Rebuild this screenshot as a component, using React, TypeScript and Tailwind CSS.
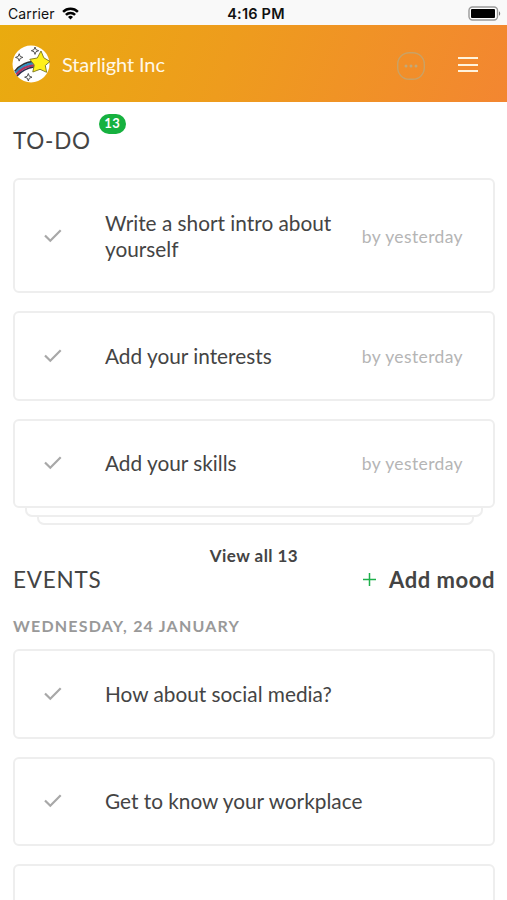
import React from 'react';

interface Task {
  id: string;
  title: string;
  due?: string;
}

const todos: Task[] = [
  { id: 'intro', title: 'Write a short intro about yourself', due: 'by yesterday' },
  { id: 'interests', title: 'Add your interests', due: 'by yesterday' },
  { id: 'skills', title: 'Add your skills', due: 'by yesterday' },
];

const events: Task[] = [
  { id: 'social', title: 'How about social media?' },
  { id: 'workplace', title: 'Get to know your workplace' },
  { id: 'next', title: '' },
];

const StatusBar: React.FC = () => (
  <div className="grid h-[25px] shrink-0 grid-cols-3 items-center bg-[#f9f9f9] pt-[3px] pr-[6px] pl-[8px] font-['Inter',sans-serif] text-[#111]">
    <div className="flex items-center gap-[7px]">
      <span className="text-[14px] leading-5 tracking-[0.1px]">Carrier</span>
      <svg className="mb-px" width="17" height="13" viewBox="0 0 17 13" fill="none" stroke="#000" strokeWidth="2.500">
        <path d="M1.100 4.900a10.500 10.500 0 0 1 14.800 0" />
        <path d="M3.900 7.900a6.500 6.500 0 0 1 9.200 0" />
        <path d="M8.500 12.500 6 10a3.500 3.500 0 0 1 5 0z" fill="#000" stroke="none" />
      </svg>
    </div>
    <span className="pl-[3px] text-center text-[14.5px] leading-5 font-semibold tracking-[0.2px]">4:16 PM</span>
    <svg className="mb-[2px] justify-self-end" width="33" height="15" viewBox="0 0 33 15">
      <rect x="1" y="1" width="28.500" height="13" rx="3.500" fill="#fff" stroke="#999" strokeWidth="1.400" />
      <rect x="3" y="3" width="24" height="9" rx="1" fill="#000" />
      <path d="M31 5.200c1.600.8 1.600 3.800 0 4.600z" fill="#777" />
    </svg>
  </div>
);

const Logo: React.FC = () => (
  <svg width="38" height="38" viewBox="0 0 38 38">
    <circle cx="19" cy="19" r="18.500" fill="#fff" />
    <path d="M2.800 26.500C7.500 20.500 13 17 22 16.500" fill="none" stroke="#333" strokeWidth="2" />
    <path d="M3.500 28C8.500 22 14 19 22 18.300" fill="none" stroke="#2f8fc0" strokeWidth="2.400" />
    <path d="M4.300 29.500C9 24 15 21 22 20.400" fill="none" stroke="#b5325f" strokeWidth="2.400" />
    <path d="M5 31C10 25.500 15.500 22.800 22 22" fill="none" stroke="#2c2c50" strokeWidth="1.600" />
    <path
      d="M29 6 31.800 12.800 38 16.500 33.300 20.500 34.600 27.300 28 24.300 20.800 27 22.300 20 17.800 14.300 25.300 13z"
      fill="#fff01a"
      stroke="#77751c"
      strokeWidth="0.900"
      strokeLinejoin="round"
    />
    <g fill="#fff" stroke="#444" strokeWidth="0.900">
      <path d="M23 2l1 2.700 2.700 1-2.700 1-1 2.700-1-2.700-2.700-1 2.700-1z" />
      <path d="M7.200 8.700l1 2.700 2.700 1-2.700 1-1 2.700-1-2.700-2.700-1 2.700-1z" />
      <path d="M16.300 28.500l1 2.700 2.700 1-2.700 1-1 2.700-1-2.700-2.700-1 2.700-1z" />
    </g>
  </svg>
);

const Header: React.FC = () => (
  <header className="flex h-[77px] shrink-0 items-center bg-[linear-gradient(110deg,#e9ab0f_0%,#ee9c1d_45%,#f38631_100%)] pr-[29px] pl-[12px]">
    <Logo />
    <span className="ml-[12px] flex-1 text-[20px] tracking-[-0.1px] text-[#fff8e8]">Starlight Inc</span>
    <button aria-label="Messages" className="mt-[4px]">
      <svg width="30" height="30" viewBox="0 0 30 30">
        <rect x="1.700" y="1.700" width="26.600" height="26.600" rx="11.500" fill="none" stroke="#c9a266" strokeWidth="1.400" />
        <g fill="#c3a878">
          <circle cx="10" cy="15" r="1.500" />
          <circle cx="15" cy="15" r="1.500" />
          <circle cx="20" cy="15" r="1.500" />
        </g>
      </svg>
    </button>
    <button aria-label="Menu" className="mt-[2px] ml-[32px] flex w-[20px] flex-col gap-[4.5px]">
      <span className="h-[2px] bg-[#fff3dc]" />
      <span className="h-[2px] bg-[#fff3dc]" />
      <span className="h-[2px] bg-[#fff3dc]" />
    </button>
  </header>
);

const TaskCard: React.FC<{ task: Task }> = ({ task }) => (
  <div className="flex min-h-[89.5px] items-center rounded-[6px] border-2 border-[#eee] bg-white py-[29.5px] pr-[30px] pl-[29px]">
    {task.title && (
      <svg className="shrink-0" width="18" height="14" viewBox="0 0 18 14" fill="none" stroke="#a8a8a8" strokeWidth="2.200">
        <path d="M1 6.500 6.300 11.800 16.700 1.300" />
      </svg>
    )}
    <span className="ml-[43px] max-w-[270px] flex-1 text-[20.8px] leading-[26px] text-[#444]">{task.title}</span>
    {task.due && (
      <span className="mt-[2px] ml-auto text-[17.5px] leading-[22px] tracking-[0.38px] whitespace-nowrap text-[#b5b5b5]">
        {task.due}
      </span>
    )}
  </div>
);

export default function App() {
  return (
    <div className="flex h-[900px] w-[507px] flex-col overflow-hidden bg-white font-['Lato',sans-serif] text-[#444]">
      <StatusBar />
      <Header />
      <main className="flex flex-col pr-[12px] pl-[13px]">
        <div className="mt-[12px] flex h-[64px] items-start gap-[8px]">
          <h2 className="mt-[12px] text-[22.5px] leading-[30px] tracking-[0.75px]">TO-DO</h2>
          <span className="flex h-[20px] w-[27px] items-center justify-center rounded-full bg-[#16b13f] text-[13px] font-bold tracking-[0.5px] text-white">
            13
          </span>
        </div>

        <section className="flex flex-col gap-[18px]">
          {todos.map((task) => (
            <TaskCard key={task.id} task={task} />
          ))}
        </section>
        <div className="mr-[12px] ml-[12px] h-[8.5px] rounded-b-[7px] border-x-2 border-b-2 border-[#eee]" />
        <div className="mr-[21px] ml-[24px] h-[8.5px] rounded-b-[7px] border-x-2 border-b-2 border-[#eee]" />

        <button className="mt-[20.5px] self-center text-[17px] leading-[20px] font-bold tracking-[0.45px]">View all 13</button>

        <div className="-mt-[1.5px] flex h-[30px] items-center justify-between">
          <h2 className="mt-px text-[22.5px] tracking-[0.8px]">EVENTS</h2>
          <button className="flex items-center gap-[13px] text-[22px] font-bold tracking-[0.55px]">
            <svg width="13" height="13" viewBox="0 0 13 13" stroke="#1eb04b" strokeWidth="1.500">
              <path d="M6.500 0v13M0 6.500h13" />
            </svg>
            Add mood
          </button>
        </div>

        <h3 className="mt-[22px] mb-[13px] text-[16px] leading-[20px] font-bold tracking-[1.2px] text-[#999]">
          WEDNESDAY, 24 JANUARY
        </h3>
        <section className="flex flex-col gap-[18px]">
          {events.map((task) => (
            <TaskCard key={task.id} task={task} />
          ))}
        </section>
      </main>
    </div>
  );
}
